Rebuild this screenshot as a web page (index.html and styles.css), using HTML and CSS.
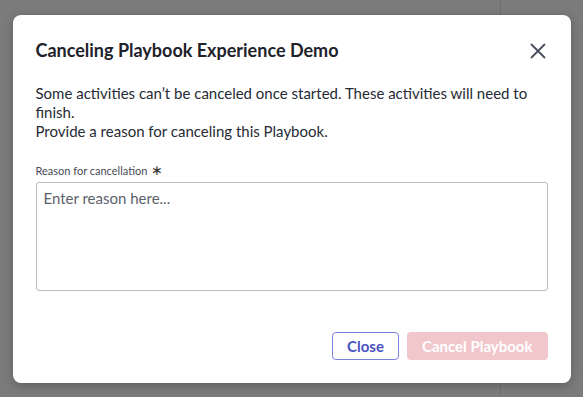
FILE: index.html
```html
<!DOCTYPE html>
<html lang="en">
<head>
    <meta charset="UTF-8">
    <meta name="viewport" content="width=device-width, initial-scale=1.0">
    <title>Cancel Playbook</title>
    <link rel="stylesheet" href="styles.css">
</head>
<body>
    <div class="modal">
        <div class="modal-header">
            <h2>Canceling Playbook Experience Demo</h2>
            <button class="icon-close" aria-label="Close">
                <svg width="16" height="16" viewBox="0 0 16 16">
                    <path d="M1.5 1.5 L14.5 14.5 M14.5 1.5 L1.5 14.5" stroke="#4a4f5c" stroke-width="1.8" stroke-linecap="round" fill="none"/>
                </svg>
            </button>
        </div>

        <p class="message">Some activities can’t be canceled once started. These activities will need to finish.<br>Provide a reason for canceling this Playbook.</p>

        <label class="field-label" for="reason">Reason for cancellation <span class="req">∗</span></label>
        <textarea id="reason" placeholder="Enter reason here..."></textarea>

        <div class="modal-footer">
            <button class="btn btn-outline">Close</button>
            <button class="btn btn-danger" disabled>Cancel Playbook</button>
        </div>
    </div>
</body>
</html>
```

FILE: styles.css
```css
/* Backdrop */
html, body {
    margin: 0;
    padding: 0;
    height: 100%;
}

body {
    font-family: Lato, "Liberation Sans", sans-serif;
    background: linear-gradient(to right, #7b7b7b 500px, #6f6f6f 500px, #6f6f6f 501px, #7b7b7b 501px);
    display: flex;
    align-items: center;
    justify-content: center;
    color: #2b2f38;
}

/* Dialog */
.modal {
    width: 558px;
    height: 368px;
    box-sizing: border-box;
    margin-top: 1px;
    padding: 23px;
    background: #fff;
    border-radius: 8px;
    box-shadow: 0 2px 10px rgba(0, 0, 0, 0.25);
    display: flex;
    flex-direction: column;
}

.modal-header {
    display: flex;
    align-items: center;
    justify-content: space-between;
    height: 24px;
}

.modal-header h2 {
    margin: 0;
    font-size: 18px;
    font-weight: bold;
    color: #1e222b;
}

.icon-close {
    background: none;
    border: none;
    padding: 0;
    margin-right: 2px;
    margin-top: 1px;
    width: 16px;
    height: 16px;
    cursor: pointer;
}

.message {
    margin: 22px 0 0;
    font-size: 15px;
    line-height: 19px;
    color: #262a33;
}

.field-label {
    margin-top: 22px;
    font-size: 11px;
    line-height: 14px;
    color: #474b55;
}

.req {
    font-size: 14px;
    color: #333;
    margin-left: 1px;
}

textarea {
    margin-top: 4px;
    height: 109px;
    box-sizing: border-box;
    padding: 6px 7px;
    border: 1.5px solid #b8bcc5;
    border-radius: 3px;
    font-family: Lato, "Liberation Sans", sans-serif;
    font-size: 15px;
    resize: none;
}

textarea::placeholder {
    color: #5c616c;
}

/* Footer */
.modal-footer {
    margin-top: auto;
    display: flex;
    justify-content: flex-end;
    gap: 8px;
}

.btn {
    height: 28px;
    padding: 0 14px;
    border-radius: 4px;
    font-family: Lato, "Liberation Sans", sans-serif;
    font-size: 15px;
    font-weight: bold;
    cursor: pointer;
}

.btn-outline {
    background: #fff;
    color: #4a52bf;
    border: 1.5px solid #7d84dc;
}

.btn-danger {
    background: #f1c7cc;
    color: #fff;
    border: none;
    padding: 0 15px;
}
```
